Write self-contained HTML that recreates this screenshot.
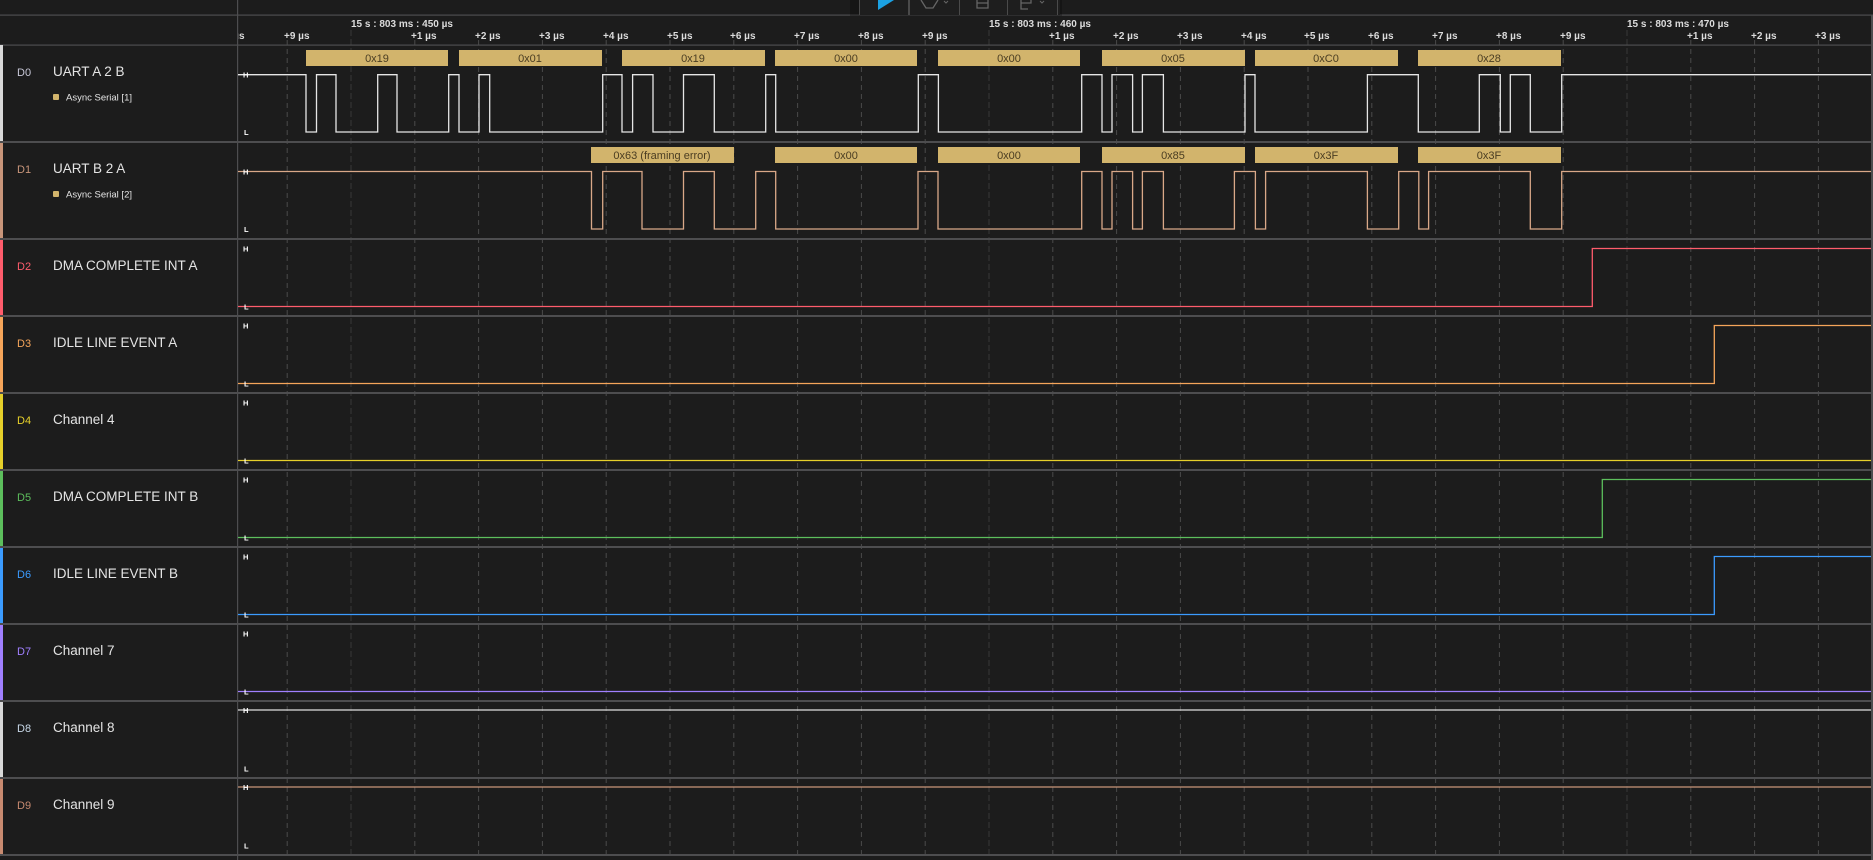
<!DOCTYPE html>
<html><head><meta charset="utf-8"><style>
html,body{margin:0;padding:0;background:#1c1c1c;width:1873px;height:860px;overflow:hidden}
svg{display:block}
text{font-family:"Liberation Sans",sans-serif}
</style></head><body>
<svg width="1873" height="860" viewBox="0 0 1873 860" xmlns="http://www.w3.org/2000/svg">
<rect width="1873" height="860" fill="#1c1c1c"/>
<defs><clipPath id="gc"><rect x="238" y="0" width="1635" height="860"/></clipPath></defs>
<!-- grid -->
<g clip-path="url(#gc)" stroke-width="1">
<g stroke="#4a4a4a" stroke-dasharray="5,4">
<line x1="287.2" y1="40" x2="287.2" y2="856"/><line x1="414.8" y1="40" x2="414.8" y2="856"/><line x1="478.6" y1="40" x2="478.6" y2="856"/><line x1="542.4" y1="40" x2="542.4" y2="856"/><line x1="606.2" y1="40" x2="606.2" y2="856"/><line x1="670" y1="40" x2="670" y2="856"/><line x1="733.8" y1="40" x2="733.8" y2="856"/><line x1="797.6" y1="40" x2="797.6" y2="856"/><line x1="861.4" y1="40" x2="861.4" y2="856"/><line x1="925.2" y1="40" x2="925.2" y2="856"/><line x1="1052.8" y1="40" x2="1052.8" y2="856"/><line x1="1116.6" y1="40" x2="1116.6" y2="856"/><line x1="1180.4" y1="40" x2="1180.4" y2="856"/><line x1="1244.2" y1="40" x2="1244.2" y2="856"/><line x1="1308" y1="40" x2="1308" y2="856"/><line x1="1371.8" y1="40" x2="1371.8" y2="856"/><line x1="1435.6" y1="40" x2="1435.6" y2="856"/><line x1="1499.4" y1="40" x2="1499.4" y2="856"/><line x1="1563.2" y1="40" x2="1563.2" y2="856"/><line x1="1690.8" y1="40" x2="1690.8" y2="856"/><line x1="1754.6" y1="40" x2="1754.6" y2="856"/><line x1="1818.4" y1="40" x2="1818.4" y2="856"/>
</g>
<g stroke="#383838" stroke-dasharray="6,3">
<line x1="351" y1="30" x2="351" y2="856"/><line x1="989" y1="30" x2="989" y2="856"/><line x1="1627" y1="30" x2="1627" y2="856"/>
</g>
<!-- ruler labels -->
<g fill="#dcdcdc" font-size="10" font-weight="bold">
<text x="219" y="39">+8 µs</text>
<text x="284" y="39">+9 µs</text><text x="411" y="39">+1 µs</text><text x="475" y="39">+2 µs</text><text x="539" y="39">+3 µs</text><text x="603" y="39">+4 µs</text><text x="667" y="39">+5 µs</text><text x="730" y="39">+6 µs</text><text x="794" y="39">+7 µs</text><text x="858" y="39">+8 µs</text><text x="922" y="39">+9 µs</text>
<text x="1049" y="39">+1 µs</text><text x="1113" y="39">+2 µs</text><text x="1177" y="39">+3 µs</text><text x="1241" y="39">+4 µs</text><text x="1304" y="39">+5 µs</text><text x="1368" y="39">+6 µs</text><text x="1432" y="39">+7 µs</text><text x="1496" y="39">+8 µs</text><text x="1560" y="39">+9 µs</text>
<text x="1687" y="39">+1 µs</text><text x="1751" y="39">+2 µs</text><text x="1815" y="39">+3 µs</text>
<text x="351" y="27">15 s : 803 ms : 450 µs</text>
<text x="989" y="27">15 s : 803 ms : 460 µs</text>
<text x="1627" y="27">15 s : 803 ms : 470 µs</text>
</g>
</g>
<!-- horizontal separators -->
<g fill="#4d4d4f">
<rect x="0" y="14.5" width="1873" height="1.2"/>
<rect x="0" y="44.5" width="1873" height="1.2"/>
<rect x="0" y="141" width="1873" height="2"/>
<rect x="0" y="238" width="1873" height="2"/>
<rect x="0" y="315" width="1873" height="2"/>
<rect x="0" y="392" width="1873" height="2"/>
<rect x="0" y="469" width="1873" height="2"/>
<rect x="0" y="546" width="1873" height="2"/>
<rect x="0" y="623" width="1873" height="2"/>
<rect x="0" y="700" width="1873" height="2"/>
<rect x="0" y="777" width="1873" height="2"/>
<rect x="0" y="854" width="1873" height="2"/>
<rect x="237" y="0" width="1.2" height="860"/>
<rect x="1871" y="15" width="2" height="845"/>
</g>
<!-- color stripes -->
<rect x="0" y="45" width="3" height="96" fill="#d8d8d8"/>
<rect x="0" y="143" width="3" height="95" fill="#c8957a"/>
<rect x="0" y="240" width="3" height="75" fill="#ff5c6c"/>
<rect x="0" y="317" width="3" height="75" fill="#f5a55a"/>
<rect x="0" y="394" width="3" height="75" fill="#e6d02a"/>
<rect x="0" y="471" width="3" height="75" fill="#5cbe5c"/>
<rect x="0" y="548" width="3" height="75" fill="#3b9bff"/>
<rect x="0" y="625" width="3" height="75" fill="#a07fff"/>
<rect x="0" y="702" width="3" height="75" fill="#d8d8d8"/>
<rect x="0" y="779" width="3" height="75" fill="#c88a70"/>
<!-- labels -->
<g font-size="11">
<text x="17" y="76" fill="#c8c8d8">D0</text>
<text x="17" y="173" fill="#c8957a">D1</text>
<text x="17" y="270" fill="#ff5c6c">D2</text>
<text x="17" y="347" fill="#f5a55a">D3</text>
<text x="17" y="424" fill="#e6d02a">D4</text>
<text x="17" y="501" fill="#5cbe5c">D5</text>
<text x="17" y="578" fill="#3b9bff">D6</text>
<text x="17" y="655" fill="#a07fff">D7</text>
<text x="17" y="732" fill="#c8d8e8">D8</text>
<text x="17" y="809" fill="#c88a70">D9</text>
</g>
<g font-size="13.5" fill="#e4e4e4">
<text x="53" y="76">UART A 2 B</text>
<text x="53" y="173">UART B 2 A</text>
<text x="53" y="270">DMA COMPLETE INT A</text>
<text x="53" y="347">IDLE LINE EVENT A</text>
<text x="53" y="424">Channel 4</text>
<text x="53" y="501">DMA COMPLETE INT B</text>
<text x="53" y="578">IDLE LINE EVENT B</text>
<text x="53" y="655">Channel 7</text>
<text x="53" y="732">Channel 8</text>
<text x="53" y="809">Channel 9</text>
</g>
<rect x="53" y="94" width="6" height="6" rx="1" fill="#d2b46c"/>
<text x="66" y="100.5" font-size="9.5" fill="#e4e4e4">Async Serial [1]</text>
<rect x="53" y="191" width="6" height="6" rx="1" fill="#d2b46c"/>
<text x="66" y="197.5" font-size="9.5" fill="#e4e4e4">Async Serial [2]</text>
<!-- decode boxes -->
<g fill="#d2b46c">
<rect x="306" y="50" width="142" height="16"/><rect x="459" y="50" width="143" height="16"/><rect x="622" y="50" width="143" height="16"/><rect x="775" y="50" width="142" height="16"/><rect x="938" y="50" width="142" height="16"/><rect x="1102" y="50" width="143" height="16"/><rect x="1255" y="50" width="143" height="16"/><rect x="1418" y="50" width="143" height="16"/>
<rect x="591" y="147" width="143" height="16"/><rect x="775" y="147" width="142" height="16"/><rect x="938" y="147" width="142" height="16"/><rect x="1102" y="147" width="143" height="16"/><rect x="1255" y="147" width="143" height="16"/><rect x="1418" y="147" width="143" height="16"/>
</g>
<g font-size="11" fill="#4a3d22" text-anchor="middle">
<text x="377" y="62">0x19</text><text x="530" y="62">0x01</text><text x="693" y="62">0x19</text><text x="846" y="62">0x00</text><text x="1009" y="62">0x00</text><text x="1173" y="62">0x05</text><text x="1326" y="62">0xC0</text><text x="1489" y="62">0x28</text>
<text x="662" y="159">0x63 (framing error)</text><text x="846" y="159">0x00</text><text x="1009" y="159">0x00</text><text x="1173" y="159">0x85</text><text x="1326" y="159">0x3F</text><text x="1489" y="159">0x3F</text>
</g>
<!-- waveforms -->
<g fill="none" stroke-width="1.3">
<path stroke="#e6e6e6" d="M238,74.7 H306 V132 H316.5 V74.7 H336 V132 H377.7 V74.7 H397 V132 H448.7 V74.7 H459 V132 H479 V74.7 H489.7 V132 H602.7 V74.7 H622 V132 H632.6 V74.7 H653 V132 H683.5 V74.7 H714.3 V132 H765.7 V74.7 H775.7 V132 H918.3 V74.7 H938.4 V132 H1081.7 V74.7 H1102 V132 H1112 V74.7 H1132.6 V132 H1142.4 V74.7 H1163.4 V132 H1245 V74.7 H1255 V132 H1367.4 V74.7 H1418.3 V132 H1479.3 V74.7 H1500.3 V132 H1510.3 V74.7 H1530.3 V132 H1561.7 V74.7 H1871"/>
<path stroke="#d9a888" d="M238,171.5 H591.5 V229 H602.7 V171.5 H642 V229 H683.5 V171.5 H714.3 V229 H755.7 V171.5 H775.7 V229 H918 V171.5 H938 V229 H1081.7 V171.5 H1102 V229 H1112 V171.5 H1132.6 V229 H1142.4 V171.5 H1163.4 V229 H1234.4 V171.5 H1255.4 V229 H1265.6 V171.5 H1367.4 V229 H1398.7 V171.5 H1418.8 V229 H1428.6 V171.5 H1530.3 V229 H1561.7 V171.5 H1871"/>
<path stroke="#ff5c6c" d="M238,306.5 H1592.3 V248.5 H1871"/>
<path stroke="#f5a55a" d="M238,383.5 H1714.3 V325.5 H1871"/>
<path stroke="#e6d02a" d="M238,460.5 H1871"/>
<path stroke="#5cbe5c" d="M238,537.5 H1602.3 V479.5 H1871"/>
<path stroke="#3b9bff" d="M238,614.5 H1714.3 V556.5 H1871"/>
<path stroke="#a07fff" d="M238,691.5 H1871"/>
<path stroke="#e0e0e0" d="M238,710 H1871"/>
<path stroke="#c8957a" d="M238,787 H1871"/>
</g>
<!-- H/L markers -->
<g font-size="7.5" font-weight="bold" fill="#ffffff">
<text x="243" y="77.5">H</text><text x="244" y="135">L</text>
<text x="243" y="174.5">H</text><text x="244" y="232">L</text>
<text x="243" y="251.5">H</text><text x="244" y="309.5">L</text>
<text x="243" y="328.5">H</text><text x="244" y="386.5">L</text>
<text x="243" y="405.5">H</text><text x="244" y="463.5">L</text>
<text x="243" y="482.5">H</text><text x="244" y="540.5">L</text>
<text x="243" y="559.5">H</text><text x="244" y="617.5">L</text>
<text x="243" y="636.5">H</text><text x="244" y="694.5">L</text>
<text x="243" y="713">H</text><text x="244" y="771.5">L</text>
<text x="243" y="790">H</text><text x="244" y="848.5">L</text>
</g>
<!-- toolbar -->
<rect x="850" y="0" width="212" height="16" fill="#000" opacity="0.25"/>
<rect x="860" y="0" width="200" height="15" fill="#1e1e1e"/>
<g fill="#4a4a4a">
<rect x="859" y="0" width="1" height="15"/><rect x="908" y="0" width="2" height="15"/><rect x="959" y="0" width="1" height="15"/><rect x="1007" y="0" width="1" height="15"/><rect x="1057" y="0" width="1" height="15"/>
</g>
<path d="M878,0 L894,0 L878,10 Z" fill="#1ba1e2"/>
<path d="M921,0 L926,8 L933,8 L938,0" fill="none" stroke="#666" stroke-width="1.3"/>
<path d="M944,1 l2,2 l2,-2" fill="none" stroke="#666" stroke-width="1"/>
<path d="M977,0 V8 H988 V0 M977,3 H988" fill="none" stroke="#666" stroke-width="1.3"/>
<path d="M1004,0 h0" stroke="none"/>
<path d="M1021,0 V9 H1028 M1021,3 H1031 V0" fill="none" stroke="#666" stroke-width="1.3"/>
<path d="M1040,1 l2,2 l2,-2" fill="none" stroke="#666" stroke-width="1"/>
</svg>
</body></html>
